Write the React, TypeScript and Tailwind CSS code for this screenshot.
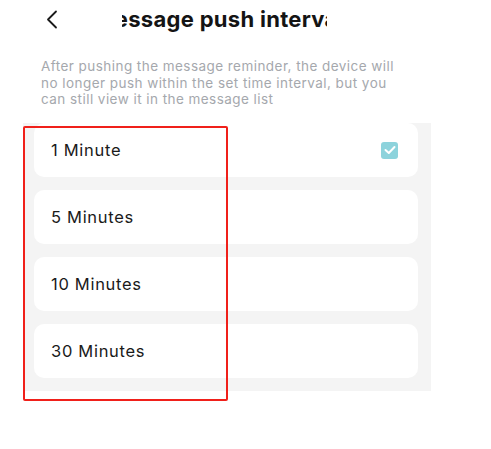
import React from "react";

const options = [
  { label: "1 Minute", checked: true },
  { label: "5 Minutes", checked: false },
  { label: "10 Minutes", checked: false },
  { label: "30 Minutes", checked: false },
];

export default function App() {
  return (
    <div
      className="relative w-[491px] h-[449px] bg-white overflow-hidden"
      style={{ fontFamily: "Inter, 'Noto Sans', sans-serif" }}
    >
      {/* Header */}
      <div className="flex items-center h-[38px]">
        <div className="w-[122px] pl-[46px] flex items-center">
          <svg width="12" height="19" viewBox="0 0 12 19" fill="none">
            <path d="M10 1.5 L2 9.5 L10 17.5" stroke="#1a1a1a" strokeWidth="1.8" strokeLinecap="round" strokeLinejoin="round" />
          </svg>
        </div>
        <div className="w-[205px] overflow-hidden whitespace-nowrap">
          <div className="ml-[-28px] text-[22px] font-bold tracking-[0.3px] text-[#141414] leading-[38px]">
            Message push interval
          </div>
        </div>
      </div>

      {/* Description */}
      <p className="ml-[41px] mt-[20px] w-[364px] text-[13.5px] tracking-[0.45px] leading-[16.7px] text-[#a5a8ad]">
        After pushing the message reminder, the device will no longer push within the set time interval, but you can still view it in the message list
      </p>

      {/* List panel */}
      <div className="ml-[23px] mt-[15px] w-[408px] bg-[#f4f4f4] pl-[11px] pr-[13px] pb-[13px] flex flex-col gap-[13px]">
        {options.map((o) => (
          <div
            key={o.label}
            className="h-[54px] bg-white rounded-[10px] flex items-center justify-between pl-[17px] pr-[20px]"
          >
            <span className="text-[16.5px] tracking-[0.7px] text-[#1a1a1a]">{o.label}</span>
            {o.checked && (
              <span className="w-[17px] h-[17px] rounded-[3px] bg-[#8dd3dc] flex items-center justify-center">
                <svg width="12" height="10" viewBox="0 0 12 10" fill="none">
                  <path d="M1.5 5 L4.8 8 L10.5 2" stroke="white" strokeWidth="2" strokeLinecap="round" strokeLinejoin="round" />
                </svg>
              </span>
            )}
          </div>
        ))}
      </div>

      {/* Annotation rectangle */}
      <div className="absolute left-[23px] top-[126px] w-[205px] h-[275px] border-2 border-[#f0201a] rounded-[2px] pointer-events-none" />
    </div>
  );
}
